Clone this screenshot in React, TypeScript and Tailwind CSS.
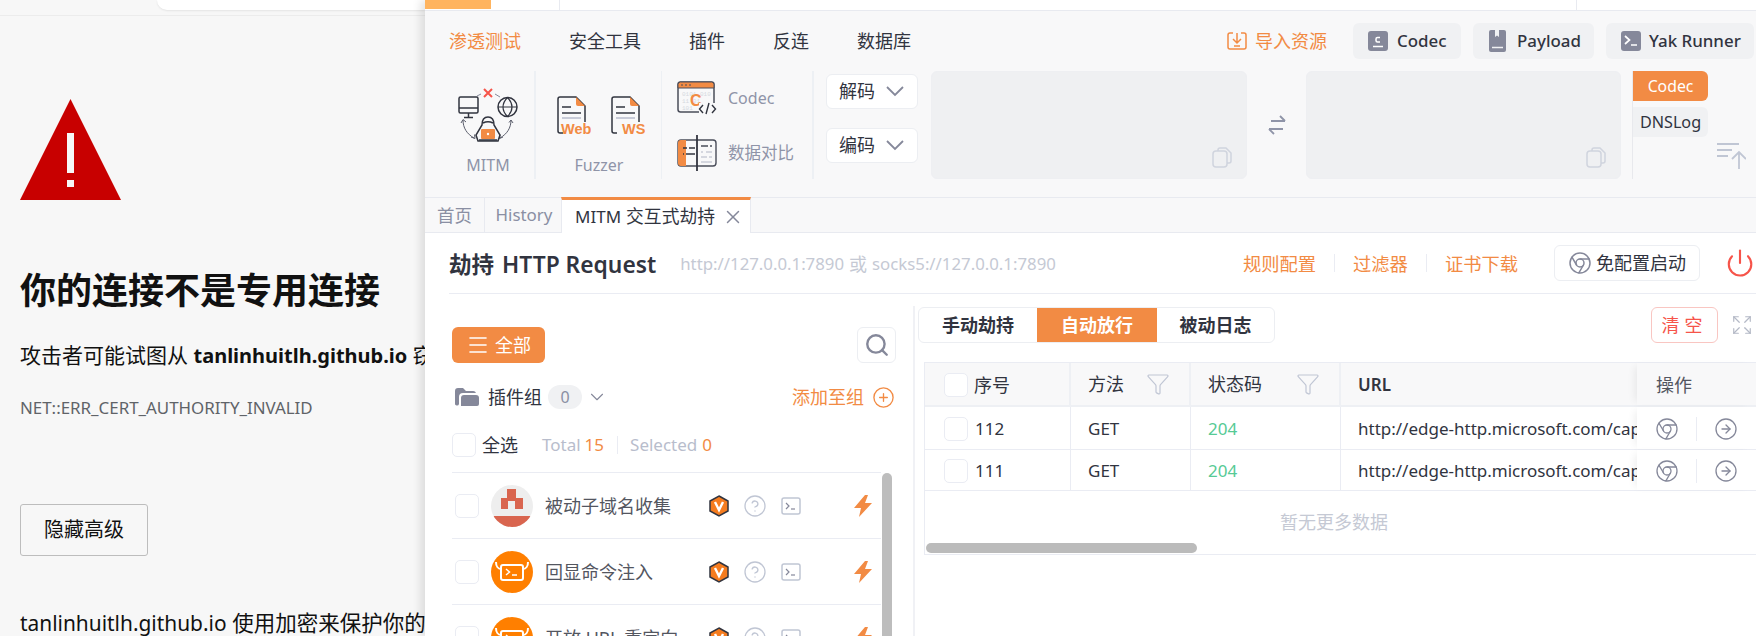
import { Chrome, ChevronDown, CircleArrowRight, CircleHelp, CirclePlus, Expand, Funnel, Menu, Power, Search, X } from "lucide-react";

function WarningIcon() {
  return (
    <svg width="101" height="101" viewBox="0 0 101 101">
      <polygon points="50.5,0 101,101 0,101" fill="#c80000" />
      <rect x="47" y="34" width="7" height="40" fill="#f7f7f7" />
      <rect x="47" y="81" width="7" height="7" fill="#f7f7f7" />
    </svg>
  );
}

function ErrorPage() {
  return (
    <div className="h-full w-[425px] shrink-0 overflow-hidden whitespace-nowrap bg-[#f7f7f7] text-[#111]">
      <div className="h-[16px] border-b border-[#ececec] pl-[157px]">
        <div className="h-[10px] rounded-bl-[14px] bg-white shadow-[0_1px_2px_rgba(0,0,0,0.08)]" />
      </div>
      <div className="pl-5">
        <div className="mt-[83px]">
          <WarningIcon />
        </div>
        <h1 className="mt-[71px] h-[40px] text-[36px] leading-[40px] font-bold">你的连接不是专用连接</h1>
        <p className="mt-[29px] h-[30px] text-[21px] leading-[30px]">
          攻击者可能试图从 <b className="text-[20px]">tanlinhuitlh.github.io</b> 窃取你的信息
        </p>
        <div className="mt-[26px] h-[24px] text-[16.900px] leading-[24px] text-[#5f6368]">NET::ERR_CERT_AUTHORITY_INVALID</div>
        <button className="mt-[84px] block h-[52px] w-[128px] rounded-[3px] border border-[#bdbdbd] text-[20px]">隐藏高级</button>
        <p className="mt-[52px] h-[30px] text-[21.500px] leading-[30px]">
          <span className="text-[20.900px]">tanlinhuitlh.github.io</span> 使用加密来保护你的信息
        </p>
      </div>
    </div>
  );
}

function MitmIcon() {
  return (
    <svg width="60" height="56" viewBox="0 0 60 56" fill="none" stroke="#31343f" strokeWidth="1.5">
      <path d="M26 2l8 8M34 2l-8 8" stroke="#f6544a" strokeWidth="2" />
      <path d="M19 9l4-2M37 7l5 3" stroke="#85889a" strokeWidth="1" />
      <rect x="1" y="10" width="19" height="16" rx="1.5" />
      <path d="M1 21h19M10.5 26v4M6 30.500h9" />
      <circle cx="49.500" cy="20" r="9.500" />
      <path d="M40 20h19M49.500 10.500c-6 6-6 13 0 19M49.500 10.500c6 6 6 13 0 19" strokeWidth="1.200" />
      <path d="M5 33c0 8 4 14 11 18M3 36l2-3.500 3 2.500M13 50l4 1.500-.5-4" stroke="#5a5d6b" strokeWidth="1" />
      <path d="M53 33c0 8-4 14-11 18M51 35.500l2-2.500 2 3M45 50l-3.500 1.500.5-4" stroke="#5a5d6b" strokeWidth="1" />
      <path d="M24 38c0-5 2-8 6-8s6 3 6 8l6 10-2 6H20l-2-6z" />
      <path d="M25 36c3-1.500 7-1.500 10 0" />
      <rect x="23" y="42" width="14" height="10" rx="1" fill="#f28b44" stroke="none" />
      <path d="M21 53h18" />
      <circle cx="30" cy="47" r="1.200" fill="#fff" stroke="none" />
    </svg>
  );
}

function DocIcon({ label, textX }: { label: string; textX: number }) {
  return (
    <svg width="34" height="40" viewBox="0 0 34 40" fill="none">
      <path d="M6 37H3a2 2 0 0 1-2-2V3a2 2 0 0 1 2-2h16l9 9v16" stroke="#31343f" strokeWidth="1.500" />
      <path d="M19 1l9 9h-7a2 2 0 0 1-2-2z" fill="#f28b44" />
      <path d="M5 11h9M5 17h19" stroke="#31343f" strokeWidth="1.500" />
      <path d="M5 22h19" stroke="#b8bdcc" strokeWidth="1.500" />
      <text x={textX} y="38" fontSize="14.500" fontWeight="600" fill="#f28b44" fontFamily="Liberation Sans, sans-serif">{label}</text>
    </svg>
  );
}

function CodecIcon() {
  return (
    <svg width="40" height="34" viewBox="0 0 40 34" fill="none">
      <rect x="1" y="1" width="36" height="30" rx="2.500" fill="#f8f8f9" stroke="#4a4d5a" strokeWidth="1.500" />
      <path d="M1 3.500a2.500 2.500 0 0 1 2.500-2.500h31a2.500 2.500 0 0 1 2.500 2.500V7H1z" fill="#f28b44" stroke="#4a4d5a" strokeWidth="1" />
      <path d="M4 4h2M8 4h2M12 4h2" stroke="#4a4d5a" strokeWidth="1" />
      <text x="5" y="15" fontSize="6" fill="#d5d8df" fontFamily="Liberation Mono, monospace">0101 010</text>
      <text x="5" y="22" fontSize="6" fill="#d5d8df" fontFamily="Liberation Mono, monospace">11     01</text>
      <text x="5" y="29" fontSize="6" fill="#d5d8df" fontFamily="Liberation Mono, monospace">101</text>
      <text x="13" y="25" fontSize="16" fontWeight="600" fill="#f28b44" fontFamily="Liberation Sans, sans-serif">C</text>
      <rect x="22" y="22" width="18" height="12" fill="#f8f8f9" />
      <path d="M26 24l-3.500 4 3.500 4M35 24l3.500 4-3.500 4M32 22l-3 11" stroke="#31343f" strokeWidth="1.400" />
    </svg>
  );
}

function CompareIcon() {
  return (
    <svg width="40" height="36" viewBox="0 0 40 36" fill="none">
      <rect x="1" y="5" width="38" height="26" rx="3" fill="#f8f8f9" stroke="#4a4d5a" strokeWidth="1.400" />
      <path d="M1 8a3 3 0 0 1 3-3h5v26H4a3 3 0 0 1-3-3z" fill="#f28b44" />
      <path d="M20 0v36" stroke="#31343f" strokeWidth="1.800" />
      <path d="M6 13h4M6 19h1M12 13h6M9 19h9" stroke="#31343f" strokeWidth="1.400" />
      <path d="M24 11h7M33 11h2" stroke="#4a4d5a" strokeWidth="1.400" />
      <path d="M24 17h2M29 17h6M24 22h6M32 22h3M24 27h11" stroke="#c9ccd6" strokeWidth="1.400" />
    </svg>
  );
}

function CopyIcon() {
  return (
    <svg width="20" height="21" viewBox="0 0 20 21" fill="none" stroke="#d0d4de" strokeWidth="1.500">
      <path d="M6 4V3a2 2 0 0 1 2-2h6l5 5v8a2 2 0 0 1-2 2h-2" />
      <rect x="1" y="4" width="14" height="16" rx="3" />
    </svg>
  );
}

function SwapIcon() {
  return (
    <svg width="18" height="20" viewBox="0 0 18 20" fill="none" stroke="#8f94a8" strokeWidth="1.800">
      <path d="M17 6H3M12 1l5 5M1 14h14M6 19l-5-5" />
    </svg>
  );
}

function SortIcon() {
  return (
    <svg width="29" height="26" viewBox="0 0 29 26" fill="none" stroke="#c0c6d4" strokeWidth="1.800">
      <path d="M0 1h22M0 7h15M0 13h11M22 26V9M15 16l7-7 7 7" />
    </svg>
  );
}

function ImportIcon() {
  return (
    <svg width="20" height="18" viewBox="0 0 20 18" fill="none" stroke="#f28b44" strokeWidth="1.500">
      <path d="M6 1H3a2 2 0 0 0-2 2v12a2 2 0 0 0 2 2h14a2 2 0 0 0 2-2V3a2 2 0 0 0-2-2h-3" />
      <path d="M10 1v9M6 7l4 4 4-4M7 14h6" />
    </svg>
  );
}

function CodecBadge() {
  return (
    <span className="flex size-[20px] shrink-0 items-center justify-center rounded-[3px] bg-[#85889a]">
      <svg width="14" height="15" viewBox="0 0 14 15" fill="none" stroke="#fff" strokeWidth="1.500">
        <path d="M9 3.500H6.500a1.500 1.500 0 0 0-1.500 1.500v1.500a1.500 1.500 0 0 0 1.500 1.500H9M2 12.500h10" />
      </svg>
    </span>
  );
}

function BookBadge() {
  return (
    <span className="flex h-[22px] w-[17px] shrink-0 items-start justify-center rounded-[2px] bg-[#85889a]">
      <svg width="17" height="22" viewBox="0 0 17 22" fill="none">
        <path d="M6 0v7l2-1.500 2 1.500V0" fill="#f0f1f3" />
        <path d="M3 17.500h11" stroke="#f0f1f3" strokeWidth="1.500" />
      </svg>
    </span>
  );
}

function TermBadge() {
  return (
    <span className="flex size-[20px] shrink-0 items-center justify-center rounded-[3px] bg-[#85889a]">
      <svg width="16" height="14" viewBox="0 0 16 14" fill="none" stroke="#fff" strokeWidth="1.700">
        <path d="M2 2l4.500 4L2 10M8 11h6" />
      </svg>
    </span>
  );
}

function TopButton({ icon, label, className }: { icon: React.ReactNode; label: string; className: string }) {
  return (
    <div className={`flex h-[36px] items-center rounded-[6px] bg-[#f0f1f3] text-[16.900px] font-medium text-[#31343f] ${className}`}>
      {icon}
      {label}
    </div>
  );
}

function SelectChevron() {
  return (
    <svg className="ml-[11px]" width="18" height="11" viewBox="0 0 18 11" fill="none" stroke="#85889a" strokeWidth="1.800">
      <path d="M1 1l8 8 8-8" />
    </svg>
  );
}

function Toolbar() {
  return (
    <div className="h-[186px] bg-[#f8f8f9] pt-[12px]">
      <div className="flex h-[36px] items-center pr-[2px] pl-[24px] text-[18px] text-[#31343f]">
        <span className="text-[#f28b44]">渗透测试</span>
        <span className="ml-[48px]">安全工具</span>
        <span className="ml-[48px]">插件</span>
        <span className="ml-[48px]">反连</span>
        <span className="ml-[48px]">数据库</span>
        <div className="ml-auto flex items-center text-[#f28b44]">
          <ImportIcon />
          <span className="ml-[8px]">导入资源</span>
        </div>
        <div className="ml-[26px] flex gap-[12px]">
          <TopButton icon={<CodecBadge />} label="Codec" className="w-[108px] gap-[9px] pl-[15px]" />
          <TopButton icon={<BookBadge />} label="Payload" className="w-[121px] gap-[11px] pl-[16px]" />
          <TopButton icon={<TermBadge />} label="Yak Runner" className="w-[148px] gap-[8px] pl-[15px]" />
        </div>
      </div>
      <div className="mt-[12px] flex h-[108px]">
        <div className="w-[111px] shrink-0 border-r-2 border-[#edf0f4] pt-[16px] pl-[33px]">
          <MitmIcon />
          <div className="mt-[11px] w-[60px] text-center text-[16px] leading-[22px] text-[#8f94a8]">MITM</div>
        </div>
        <div className="w-[126px] shrink-0 border-r border-[#edf0f4] pt-[25px] pl-[21px]">
          <div className="flex gap-[20px]">
            <DocIcon label="Web" textX={4} />
            <DocIcon label="WS" textX={11} />
          </div>
          <div className="mt-[18px] w-[84px] text-center text-[16px] leading-[22px] text-[#8f94a8]">Fuzzer</div>
        </div>
        <div className="flex w-[152px] shrink-0 flex-col border-r-2 border-[#edf0f4] pt-[10px] pl-[15px] text-[#8f94a8]">
          <div className="flex h-[34px] items-center gap-[11px] text-[16px]">
            <CodecIcon />
            Codec
          </div>
          <div className="mt-[20px] flex h-[36px] items-center gap-[11px] text-[16.500px]">
            <CompareIcon />
            数据对比
          </div>
        </div>
        <div className="flex w-[117px] shrink-0 flex-col gap-[19px] pt-[3px] pl-[12px]">
          {["解码", "编码"].map((name) => (
            <div key={name} className="flex h-[35px] w-[92px] items-center rounded-[6px] border border-[#eceef2] bg-white pl-[12px] text-[18px] text-[#31343f]">
              {name}
              <SelectChevron />
            </div>
          ))}
        </div>
        <div className="flex h-full w-[316px] shrink-0 items-end justify-end rounded-[6px] border border-[#eeeff2] bg-[#eff0f2] pr-[14px] pb-[10px]">
          <CopyIcon />
        </div>
        <div className="flex w-[59px] shrink-0 items-center justify-center">
          <SwapIcon />
        </div>
        <div className="flex h-full w-[315px] shrink-0 items-end justify-end rounded-[6px] border border-[#eeeff2] bg-[#eff0f2] pr-[14px] pb-[10px]">
          <CopyIcon />
        </div>
        <div className="ml-[11px] flex h-full w-[76px] shrink-0 flex-col gap-[6px] border-l border-[#e8e9ed] text-center">
          <div className="h-[30px] rounded-r-[6px] bg-[#f28b44] text-[15.800px] leading-[30px] text-white">Codec</div>
          <div className="h-[30px] rounded-r-[6px] bg-[#f0f1f3] text-[16.200px] leading-[30px] text-[#31343f]">DNSLog</div>
        </div>
        <div className="ml-[9px] pt-[72px]">
          <SortIcon />
        </div>
      </div>
    </div>
  );
}

function TabBar() {
  return (
    <div className="flex h-[36px] border-y border-[#e8eaf0] bg-[#f8f8f9] text-[#8a8fa3]">
      <div className="flex w-[60px] items-center justify-center border-r border-[#e8eaf0] text-[17.500px]">首页</div>
      <div className="flex w-[78px] items-center justify-center text-[16.900px]">History</div>
      <div className="-mt-px -mb-px -ml-[2px] flex w-[190px] items-center border-x border-t-[3px] border-x-[#e8eaf0] border-t-[#f28b44] bg-white pl-[13px] text-[#31343f]">
        <span className="text-[17px]">MITM</span>
        <span className="ml-[5px] text-[17.800px]">交互式劫持</span>
        <X className="ml-[7px] size-[22px] text-[#85889a]" strokeWidth={1.600} />
      </div>
    </div>
  );
}

function YakAvatar() {
  return (
    <span className="flex size-[42px] shrink-0 items-center justify-center rounded-full bg-[#ff7f00]">
      <svg width="34" height="24" viewBox="0 0 34 24" fill="none" stroke="#fff" strokeWidth="2">
        <rect x="6" y="5" width="22" height="15" rx="2" />
        <path d="M6 9C3 9 1 6 1 2M28 9c3 0 5-3 5-7" />
        <path d="M11 9l3.500 3L11 15M17 15h5" strokeWidth="1.500" />
      </svg>
    </span>
  );
}

function DomainAvatar() {
  return (
    <svg className="shrink-0" width="42" height="42" viewBox="0 0 42 42">
      <clipPath id="domain-clip">
        <circle cx="21" cy="21" r="21" />
      </clipPath>
      <circle cx="21" cy="21" r="21" fill="#eeeeee" />
      <path d="M16 4h9v9h7v11h-8v-8h-7v8H10V13h6z" fill="#d9654f" />
      <rect x="0" y="31" width="42" height="11" fill="#d9654f" clipPath="url(#domain-clip)" />
    </svg>
  );
}

function VipBadge() {
  return (
    <svg width="20" height="22" viewBox="0 0 20 22">
      <polygon points="10,1 19,6 19,16 10,21 1,16 1,6" fill="#f57c1f" stroke="#31343f" strokeWidth="1.500" />
      <path d="M6 7l4 8 4-8" fill="none" stroke="#fff" strokeWidth="2.400" />
    </svg>
  );
}

function BoltIcon() {
  return (
    <svg width="18" height="22" viewBox="0 0 18 22">
      <path d="M11 0L0 13h7l-2 9 13-14h-7l3-8z" fill="#f28b44" />
    </svg>
  );
}

function TerminalIcon() {
  return (
    <svg width="20" height="18" viewBox="0 0 20 18" fill="none" stroke="#c0c6d4" strokeWidth="1.500">
      <rect x="1" y="1" width="18" height="16" rx="2" />
      <path d="M5 6l3 3-3 3" stroke="#85889a" strokeWidth="1.200" />
      <path d="M10 12h4" stroke="#85889a" strokeWidth="1.200" />
    </svg>
  );
}

function PluginRow({ name, avatar }: { name: string; avatar: React.ReactNode }) {
  return (
    <div className="flex h-[66px] shrink-0 items-center border-b border-[#eaecf3] pl-[3px]">
      <span className="size-[24px] shrink-0 rounded-[5px] border border-[#eaecf3]" />
      <span className="ml-[12px]">{avatar}</span>
      <span className="ml-[12px] w-[164px] pt-[2px] text-[18px] whitespace-nowrap text-[#53565f]">{name}</span>
      <VipBadge />
      <CircleHelp className="ml-[14px] size-[24px] text-[#c0c6d4]" strokeWidth={1.300} />
      <span className="ml-[14px]">
        <TerminalIcon />
      </span>
      <span className="ml-[53px]">
        <BoltIcon />
      </span>
    </div>
  );
}

function PluginColumn() {
  return (
    <div className="mt-[12px] h-[330px] w-[490px] shrink-0 overflow-hidden border-r-2 border-[#f0f1f5] pt-[21px] pl-[27px]">
      <div className="flex items-center pr-[17px]">
        <div className="flex h-[36px] w-[93px] items-center rounded-[6px] bg-[#f28b44] pl-[14px] text-[18px] text-white">
          <Menu className="size-[24px]" strokeWidth={1.600} />
          <span className="ml-[5px]">全部</span>
        </div>
        <div className="ml-auto flex size-[36px] w-[39px] items-center justify-center rounded-[6px] border border-[#eceef2]">
          <Search className="size-[26px] text-[#85889a]" strokeWidth={2.200} />
        </div>
      </div>
      <div className="mt-[22px] flex h-[24px] items-center pr-[18px] pl-[3px] text-[18px] text-[#31343f]">
        <svg width="24" height="18" viewBox="0 0 24 18" fill="#85889a">
          <path d="M0 3a3 3 0 0 1 3-3h5l3 3h7a3 3 0 0 1 3 2H8a4 4 0 0 0-4 4v7a2 2 0 0 1-4-1z" />
          <path d="M9 7h12a3 3 0 0 1 3 3v6a2 2 0 0 1-2 2H6V10a3 3 0 0 1 3-3z" />
        </svg>
        <span className="ml-[9px]">插件组</span>
        <span className="ml-[6px] flex h-[24px] w-[34px] items-center justify-center rounded-full bg-[#f0f1f3] text-[16px] text-[#8a8fa3]">0</span>
        <ChevronDown className="ml-[4px] size-[22px] text-[#85889a]" strokeWidth={1.200} />
        <span className="ml-auto text-[#f28b44]">添加至组</span>
        <CirclePlus className="ml-[8px] size-[23px] text-[#f28b44]" strokeWidth={1.400} />
      </div>
      <div className="mt-[24px] flex h-[24px] items-center">
        <span className="size-[24px] rounded-[5px] border border-[#eaecf3]" />
        <span className="ml-[6px] text-[18px] text-[#31343f]">全选</span>
        <span className="ml-[24px] text-[17px] text-[#b8bdcc]">Total</span>
        <span className="ml-[4px] text-[17px] text-[#f28b44]">15</span>
        <span className="ml-[13px] h-[18px] border-l border-[#eaecf3]" />
        <span className="ml-[12px] text-[17px] text-[#b8bdcc]">Selected</span>
        <span className="ml-[5px] text-[17px] text-[#f28b44]">0</span>
      </div>
      <div className="mt-[15px] flex">
        <div className="flex h-[198px] w-[429px] flex-col border-t border-[#eaecf3]">
          <PluginRow name="被动子域名收集" avatar={<DomainAvatar />} />
          <PluginRow name="回显命令注入" avatar={<YakAvatar />} />
          <PluginRow name="开放 URL 重定向" avatar={<YakAvatar />} />
        </div>
        <div className="mt-px ml-px h-[170px] w-[10px] rounded-[5px] bg-[#bdbdbd]" />
      </div>
    </div>
  );
}

function HeaderCell({ label }: { label: string }) {
  return (
    <div className="flex items-center border-r-2 border-[#eef0f4] pr-[19px] pl-[17px] text-[18px] text-[#31343f]">
      {label}
      <Funnel className="ml-auto size-[24px] text-[#c0c6d4]" strokeWidth={1.200} />
    </div>
  );
}

function DataRow({ no, height }: { no: number; height: string }) {
  return (
    <div className={`grid grid-cols-[146px_120px_150px_296px_119px] border-b border-[#eaecf3] text-[17px] text-[#31343f] ${height}`}>
      <div className="flex items-center border-r border-[#eaecf3] pt-[2px] pl-[19px]">
        <span className="size-[24px] rounded-[5px] border border-[#eaecf3]" />
        <span className="ml-[7px]">{no}</span>
      </div>
      <div className="flex items-center border-r border-[#eaecf3] pt-[2px] pl-[17px]">GET</div>
      <div className="flex items-center border-r border-[#eaecf3] pt-[2px] pl-[17px] text-[#56ca95]">204</div>
      <div className="flex items-center overflow-hidden pt-[2px] pl-[17px] whitespace-nowrap">http://edge-http.microsoft.com/captiveportal/generate_204</div>
      <div className="z-10 flex items-center bg-white pt-[2px] pl-[18px] shadow-[-6px_0_8px_-4px_rgba(0,0,0,0.07)]">
        <Chrome className="size-[24px] text-[#85889a]" strokeWidth={1.300} />
        <span className="ml-[17px] h-[24px] border-l border-[#eaecf3]" />
        <CircleArrowRight className="ml-[17px] size-[24px] text-[#85889a]" strokeWidth={1.300} />
      </div>
    </div>
  );
}

function LogColumn() {
  return (
    <div className="min-w-0 flex-1 overflow-hidden pt-[13px]">
      <div className="flex h-[36px] items-center pr-[3px] pl-[3px]">
        <div className="flex h-full overflow-hidden rounded-[6px] border border-[#eceef2] text-[18px] font-bold text-[#31343f]">
          <span className="flex w-[118px] items-center justify-center">手动劫持</span>
          <span className="flex w-[120px] items-center justify-center bg-[#f28b44] text-white">自动放行</span>
          <span className="flex w-[117px] items-center justify-center">被动日志</span>
        </div>
        <div className="ml-auto flex h-full w-[67px] items-center justify-center rounded-[6px] border border-[#f9c6c2] text-[18px] tracking-[5px] text-[#f6544a]">清空</div>
        <Expand className="ml-[13px] size-[22px] text-[#b4b9c6]" strokeWidth={1.300} />
      </div>
      <div className="mt-[19px] ml-[9px] border-y border-l border-[#eaecf3] pb-px">
        <div className="grid h-[44px] grid-cols-[146px_120px_150px_296px_119px] border-b-2 border-[#eef0f4] bg-[#f8f8f9]">
          <div className="flex items-center border-r-2 border-[#eef0f4] pt-[2px] pl-[19px] text-[18px] text-[#31343f]">
            <span className="size-[24px] rounded-[5px] border border-[#eaecf3] bg-white" />
            <span className="ml-[6px]">序号</span>
          </div>
          <HeaderCell label="方法" />
          <HeaderCell label="状态码" />
          <div className="flex items-center pt-[2px] pl-[17px] text-[17px] font-semibold text-[#31343f]">URL</div>
          <div className="z-10 flex items-center pt-[2px] pl-[19px] text-[18px] text-[#53565f] shadow-[-6px_0_8px_-4px_rgba(0,0,0,0.07)]">操作</div>
        </div>
        <DataRow no={112} height="h-[43px]" />
        <DataRow no={111} height="h-[41px]" />
        <div className="flex h-[52px] items-center justify-center pt-[10px] pr-[13px] text-[18px] text-[#c5c9d4]">暂无更多数据</div>
        <div className="ml-px h-[10px] w-[271px] rounded-[5px] bg-[#bbbbbb]" />
      </div>
    </div>
  );
}

function MainPane() {
  return (
    <div className="min-h-0 flex-1 bg-white">
      <div className="ml-[24px] flex h-[61px] items-center border-b border-[#eaecf3] text-[18.300px]">
        <span className="pt-[4px] text-[22.500px] font-semibold text-[#31343f]">劫持</span>
        <span className="ml-[8px] pt-[4px] text-[22.800px] font-semibold text-[#31343f]">HTTP Request</span>
        <span className="ml-[24px] pt-[2px] text-[16.800px] text-[#c5c9d4]">http://127.0.0.1:7890</span>
        <span className="ml-[5px] pt-[2px] text-[18px] text-[#c5c9d4]">或</span>
        <span className="ml-[5px] pt-[2px] text-[16.800px] text-[#c5c9d4]">socks5://127.0.0.1:7890</span>
        <span className="ml-auto pt-[2px] text-[#f28b44]">规则配置</span>
        <span className="mx-[18px] h-[18px] border-l border-[#eaecf3]" />
        <span className="pt-[2px] text-[#f28b44]">过滤器</span>
        <span className="mx-[18px] h-[18px] border-l border-[#eaecf3]" />
        <span className="pt-[2px] text-[#f28b44]">证书下载</span>
        <div className="ml-[36px] flex h-[36px] w-[146px] items-center rounded-[6px] border border-[#eceef2] pl-[13px] text-[18px] text-[#31343f]">
          <Chrome className="size-[24px] text-[#85889a]" strokeWidth={1.500} />
          <span className="ml-[4px]">免配置启动</span>
        </div>
        <Power className="mr-px ml-[25px] size-[30px] text-[#f6544a]" strokeWidth={1.700} />
      </div>
      <div className="flex">
        <PluginColumn />
        <LogColumn />
      </div>
    </div>
  );
}

function YakitPanel() {
  return (
    <div className="z-10 flex h-full min-w-0 flex-1 flex-col shadow-[-5px_0_8px_rgba(0,0,0,0.1)]">
      <div className="flex h-[11px] border-b border-[#e8eaf0] bg-white">
        <div className="h-[9px] w-[66px] bg-[#ffb45f]" />
        <div className="ml-[68px] w-[1018px] border-x border-[#e8eaf0]" />
      </div>
      <Toolbar />
      <TabBar />
      <MainPane />
    </div>
  );
}

export default function App() {
  return (
    <div className="flex h-[636px] w-[1756px] overflow-hidden font-['Noto_Sans','Noto_Sans_CJK_SC',sans-serif]">
      <ErrorPage />
      <YakitPanel />
    </div>
  );
}
